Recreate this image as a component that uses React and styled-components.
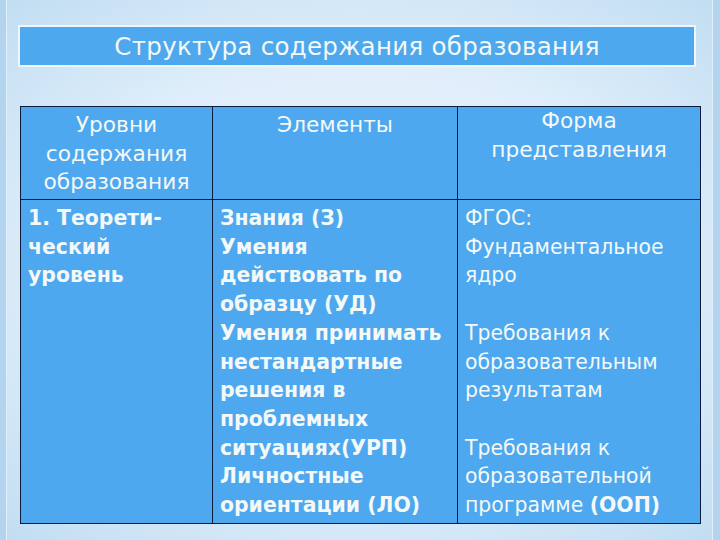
import React from "react";
import styled, { createGlobalStyle } from "styled-components";

const Global = createGlobalStyle`
  html, body { margin: 0; padding: 0; }
  body { width: 720px; height: 540px; overflow: hidden; }
`;

const Slide = styled.div`
  width: 720px;
  height: 540px;
  box-sizing: border-box;
  padding: 25px 20px 0 18px;
  font-family: "DejaVu Sans", Verdana, sans-serif;
  color: #f4f8f6;
  background:
    radial-gradient(ellipse 75% 70% at 50% 50%, #edf6fd 0%, #dfeefa 55%, #bfdcf2 100%);
  box-shadow: inset 6px 0 0 #b3d4ef, inset 7px 0 0 #e3f0fa, inset -7px 0 0 #b3d4ef, inset -8px 0 0 #e3f0fa;
`;

const TitleBar = styled.div`
  width: 678px;
  height: 42px;
  box-sizing: border-box;
  border: 2px solid #eef6fd;
  background: #4da8ee;
  display: flex;
  align-items: center;
  justify-content: center;
  font-size: 24.5px;
  letter-spacing: 0.3px;
`;

const Table = styled.table`
  margin: 39px 0 0 2px;
  width: 680px;
  border-collapse: collapse;
  table-layout: fixed;
  background: #4ea8ef;
`;

const Cell = styled.td`
  border: 1.5px solid #0d1b3a;
  vertical-align: top;
  font-size: ${(p) => (p.$center ? 21.7 : 20.4)}px;
  line-height: 28.7px;
  white-space: nowrap;
  padding: ${(p) => p.$pt ?? 4}px 0 0 ${(p) => (p.$center ? 0 : 7)}px;
  text-align: ${(p) => (p.$center ? "center" : "left")};
  font-weight: ${(p) => (p.$bold ? "bold" : "normal")};
  height: ${(p) => p.$h}px;
  box-sizing: border-box;
  letter-spacing: 0;
`;

const B = styled.b`
  font-weight: bold;
`;

const lines = (arr) =>
  arr.map((l, i) => (
    <React.Fragment key={i}>
      {l}
      {i < arr.length - 1 && <br />}
    </React.Fragment>
  ));

export default function App() {
  return (
    <>
      <Global />
      <Slide>
        <TitleBar>Структура содержания образования</TitleBar>
        <Table>
          <colgroup>
            <col style={{ width: 192 }} />
            <col style={{ width: 245 }} />
            <col style={{ width: 243 }} />
          </colgroup>
          <tbody>
            <tr>
              <Cell $center $h={93}>
                {lines(["Уровни", "содержания", "образования"])}
              </Cell>
              <Cell $center $h={93}>Элементы</Cell>
              <Cell $center $pt={0} $h={93}>
                {lines(["Форма", "представления"])}
              </Cell>
            </tr>
            <tr>
              <Cell $bold $h={324}>
                {lines(["1. Теорети-", "ческий", "уровень"])}
              </Cell>
              <Cell $bold $h={324}>
                {lines([
                  "Знания (З)",
                  "Умения",
                  "действовать по",
                  "образцу (УД)",
                  "Умения принимать",
                  "нестандартные",
                  "решения в",
                  "проблемных",
                  "ситуациях(УРП)",
                  "Личностные",
                  "ориентации (ЛО)",
                ])}
              </Cell>
              <Cell $h={324}>
                {lines([
                  "ФГОС:",
                  "Фундаментальное",
                  "ядро",
                  "\u00a0",
                  "Требования к",
                  "образовательным",
                  "результатам",
                  "\u00a0",
                  "Требования к",
                  "образовательной",
                ])}
                <br />
                программе <B>(ООП)</B>
              </Cell>
            </tr>
          </tbody>
        </Table>
      </Slide>
    </>
  );
}
